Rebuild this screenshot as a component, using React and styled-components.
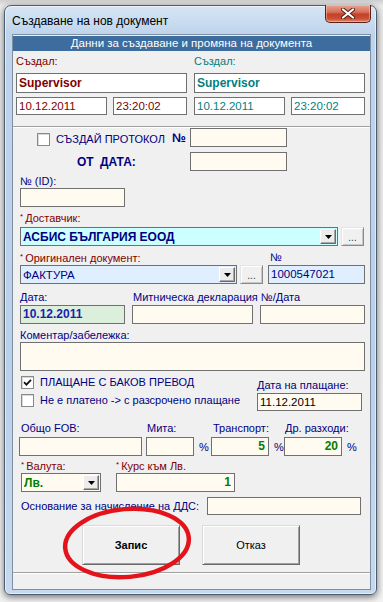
import React from "react";
import styled, { createGlobalStyle } from "styled-components";

const NAVY = "#000080";
const MAROON = "#800000";
const TEAL = "#008080";
const GREEN = "#008000";

const GlobalStyle = createGlobalStyle`
  html, body {
    margin: 0;
    padding: 0;
  }
  body {
    font-family: "Liberation Sans", Arial, sans-serif;
    background: #e6e6e6;
  }
  * {
    box-sizing: border-box;
  }
`;

const Desktop = styled.div`
  width: 383px;
  height: 602px;
  padding: 5px 0 0 4px;
  overflow: hidden;
  background: linear-gradient(to bottom, #cfcfcf 0, #ebebeb 6px, #f2f2f2 100%);
`;

const Window = styled.div`
  width: 373px;
  height: 590px;
  display: flex;
  flex-direction: column;
  padding: 0 5px 4px 7px;
  border: 1px solid #4e5d6e;
  border-radius: 7px 7px 6px 6px;
  background: linear-gradient(to bottom, #d6e5f5 0, #bed4ec 28px, #b9d0e9 60%, #c6d9ee 100%);
  box-shadow: inset 0 0 0 1px rgba(255, 255, 255, 0.55), 0 2px 7px rgba(0, 0, 0, 0.55);
`;

const TitleBar = styled.div`
  height: 28px;
  display: flex;
  align-items: flex-start;
  justify-content: space-between;
`;

const Caption = styled.div`
  font-size: 12px;
  line-height: 28px;
  padding-top: 1px;
  color: #000;
`;

const CloseButton = styled.div`
  width: 46px;
  height: 18px;
  margin-top: -1px;
  display: flex;
  align-items: center;
  justify-content: center;
  border: 1px solid #5c2018;
  border-top: none;
  border-radius: 0 0 5px 5px;
  background: linear-gradient(to bottom, #e8a291 0, #d7735d 40%, #c2422a 55%, #c94f34 80%, #e08a6c 100%);
  box-shadow: inset 0 0 0 1px rgba(255, 210, 190, 0.45);
`;

const Client = styled.div`
  position: relative;
  height: 556px;
  display: flex;
  flex-direction: column;
  background: #f0f0f0;
  border: 1px solid #7f8fa1;
`;

const GroupBox = styled.section`
  padding: 1px 0 11px;
  border-bottom: 1px solid #a0a0a0;
`;

const GroupHeader = styled.div`
  height: 15px;
  background: #3d6c9e;
  color: #fff;
  font-size: 11.5px;
  line-height: 15px;
  text-align: center;
`;

const AuditColumns = styled.div`
  display: grid;
  grid-template-columns: 171px 171px;
  column-gap: 7px;
  padding: 3px 0 0 3px;
`;

const AuditColumn = styled.div`
  display: flex;
  flex-direction: column;
`;

const Label = styled.div`
  flex: none;
  width: ${(p) => (p.$w ? `${p.$w}px` : "auto")};
  height: 14px;
  padding-left: ${(p) => p.$pl || 0}px;
  font-size: 11px;
  line-height: 14px;
  color: ${(p) => p.$color || NAVY};
  white-space: nowrap;
`;

const Star = styled.span`
  font-size: 8px;
  vertical-align: 3px;
  margin-right: 2px;
`;

const Field = styled.div`
  flex: none;
  width: ${(p) => p.$w}px;
  height: ${(p) => p.$h || 19}px;
  margin-top: ${(p) => p.$mt || 0}px;
  margin-left: ${(p) => p.$ml || 0}px;
  padding: 0 3px 0 2px;
  border: 1px solid #707070;
  background: ${(p) => p.$bg || "#fffbf0"};
  color: ${(p) => p.$color || "#000"};
  font-size: ${(p) => (p.$bold ? 12 : 11.5)}px;
  font-weight: ${(p) => (p.$bold ? 700 : 400)};
  line-height: ${(p) => (p.$h || 19) - 2}px;
  text-align: ${(p) => p.$align || "left"};
  white-space: nowrap;
  overflow: hidden;
`;

const DateRow = styled.div`
  display: flex;
  gap: 6px;
  margin-top: 4px;
`;

const Form = styled.div`
  display: flex;
  flex-direction: column;
  padding-left: 7px;
  border-top: 1px solid #fff;
`;

const Row = styled.div`
  display: flex;
  align-items: ${(p) => p.$align || "flex-start"};
  margin-top: ${(p) => p.$mt || 0}px;
`;

const CheckLine = styled.label`
  flex: none;
  display: flex;
  align-items: center;
  gap: 6px;
  width: ${(p) => (p.$w ? `${p.$w}px` : "auto")};
  height: ${(p) => p.$h || 18}px;
  margin-left: ${(p) => p.$ml || 0}px;
  align-self: ${(p) => p.$self || "auto"};
  font-size: 11px;
  color: ${NAVY};
  white-space: nowrap;
`;

const CheckBox = styled.span`
  flex: none;
  width: 13px;
  height: 13px;
  display: flex;
  align-items: center;
  justify-content: center;
  border: 1px solid #8a8a8a;
  background: #fff;
  box-shadow: inset 1px 1px 0 #d8d8d8;
`;

const NumSign = styled.div`
  flex: none;
  width: 15px;
  font-size: 12.5px;
  font-weight: 700;
  color: ${NAVY};
`;

const StrongLabel = styled.div`
  flex: none;
  width: ${(p) => p.$w}px;
  padding-left: ${(p) => p.$pl || 0}px;
  font-size: 12px;
  font-weight: 700;
  color: ${NAVY};
  word-spacing: 3px;
`;

const Combo = styled.div`
  flex: none;
  display: flex;
  align-items: center;
  width: ${(p) => p.$w}px;
  height: 19px;
  margin-left: ${(p) => p.$ml || 0}px;
  padding: 1px 1px 1px 2px;
  border: 1px solid #707070;
  background: ${(p) => p.$bg};
  color: ${(p) => p.$color};
  font-size: ${(p) => (p.$bold ? 12 : 11.5)}px;
  font-weight: ${(p) => (p.$bold ? 700 : 400)};
  white-space: nowrap;
`;

const ComboText = styled.span`
  flex: 1;
  overflow: hidden;
`;

const ArrowButton = styled.span`
  flex: none;
  width: 16px;
  height: 15px;
  display: flex;
  align-items: center;
  justify-content: center;
  background: #ececec;
  border: 1px solid;
  border-color: #fff #6b6b6b #6b6b6b #fff;
  box-shadow: inset -1px -1px 0 #a8a8a8;
`;

const DotsButton = styled.div`
  flex: none;
  width: 23px;
  height: 19px;
  margin-left: ${(p) => p.$ml || 0}px;
  display: flex;
  align-items: flex-end;
  justify-content: center;
  padding-bottom: 3px;
  background: #f0f0f0;
  border: 1px solid;
  border-color: #e4e4e4 #8a8a8a #8a8a8a #e4e4e4;
  box-shadow: inset 1px 1px 0 #fff, inset -1px -1px 0 #c8c8c8;
  font-size: 10px;
  line-height: 8px;
  color: #333;
`;

const PaymentBlock = styled.div`
  display: flex;
  margin-top: 2px;
`;

const PaymentChecks = styled.div`
  width: 237px;
  display: flex;
  flex-direction: column;
`;

const PaymentDate = styled.div`
  display: flex;
  flex-direction: column;
  padding-top: 5px;
`;

const CostGroup = styled.div`
  flex: none;
  display: flex;
  flex-direction: column;
  margin-left: ${(p) => p.$ml || 0}px;
`;

const CostLine = styled.div`
  display: flex;
  align-items: center;
  margin-top: 2px;
`;

const Percent = styled.span`
  flex: none;
  width: 7px;
  margin-left: 5px;
  font-size: 11px;
  color: ${NAVY};
`;

const ButtonBar = styled.div`
  display: flex;
  gap: 22px;
  margin: 10px 0 0 62px;
`;

const PushButton = styled.div`
  width: 98px;
  height: 40px;
  display: flex;
  align-items: center;
  justify-content: center;
  background: #f0f0f0;
  border: 1px solid;
  border-color: #dadada #696969 #696969 #dadada;
  box-shadow: inset 1px 1px 0 #fff, inset -1px -1px 0 #a0a0a0;
  font-size: 11px;
  font-weight: ${(p) => (p.$primary ? 700 : 400)};
  color: #000;
`;

const StatusBar = styled.div`
  margin-top: auto;
  height: 17px;
  border-top: 1px solid #a0a0a0;
  box-shadow: inset 0 1px 0 #fff;
`;

const Annotation = styled.svg`
  position: absolute;
  left: 47px;
  top: 470px;
  pointer-events: none;
`;

const DownArrow = () => (
  <svg width="7" height="4" viewBox="0 0 7 4">
    <polygon points="0,0 7,0 3.5,4" fill="#000" />
  </svg>
);

const CheckMark = () => (
  <svg width="9" height="9" viewBox="0 0 9 9">
    <path d="M1 4.2 L3.4 6.6 L8 1.8" fill="none" stroke="#111" strokeWidth="1.8" />
  </svg>
);

const Check = ({ checked }) => <CheckBox>{checked && <CheckMark />}</CheckBox>;

const Req = ({ children }) => (
  <>
    <Star>*</Star>
    {children}
  </>
);

const AuditBlock = ({ color, user, date, time, right }) => (
  <AuditColumn>
    <Label $color={color}>Създал:</Label>
    <Field $w={171} $h={20} $mt={5} $bg="#fff" $color={color} $bold>
      {user}
    </Field>
    <DateRow>
      <Field $w={91} $h={18} $bg="#fff" $color={color}>
        {date}
      </Field>
      <Field $w={right ? 74 : 74} $h={18} $bg="#fff" $color={color}>
        {time}
      </Field>
    </DateRow>
  </AuditColumn>
);

export default function App() {
  return (
    <>
      <GlobalStyle />
      <Desktop>
        <Window>
          <TitleBar>
            <Caption>Създаване на нов документ</Caption>
            <CloseButton>
              <svg width="14" height="11" viewBox="0 0 14 11">
                <path d="M2 1.5 L12 9.5 M12 1.5 L2 9.5" stroke="#5a1d12" strokeWidth="4" strokeLinecap="round" />
                <path d="M2 1.5 L12 9.5 M12 1.5 L2 9.5" stroke="#fff" strokeWidth="2.2" strokeLinecap="round" />
              </svg>
            </CloseButton>
          </TitleBar>

          <Client>
            <GroupBox>
              <GroupHeader>Данни за създаване и промяна на документа</GroupHeader>
              <AuditColumns>
                <AuditBlock color={MAROON} user="Supervisor" date="10.12.2011" time="23:20:02" />
                <AuditBlock color={TEAL} user="Supervisor" date="10.12.2011" time="23:20:02" right />
              </AuditColumns>
            </GroupBox>

            <Form>
              <Row>
                <CheckLine $w={135} $h={16} $ml={17} $self="flex-end">
                  <Check />
                  СЪЗДАЙ ПРОТОКОЛ
                </CheckLine>
                <NumSign style={{ alignSelf: "center" }}>№</NumSign>
                <Field $w={97} $ml={3} />
              </Row>

              <Row $mt={5} $align="center">
                <StrongLabel $w={170} $pl={57}>
                  ОТ ДАТА:
                </StrongLabel>
                <Field $w={97} />
              </Row>

              <Label style={{ marginTop: 3 }}>№ (ID):</Label>
              <Field $w={105} />

              <Label $color={MAROON} style={{ marginTop: 3 }}>
                <Req>Доставчик:</Req>
              </Label>
              <Row $mt={3}>
                <Combo $w={318} $bg="#ccffff" $color={NAVY} $bold>
                  <ComboText>АСБИС БЪЛГАРИЯ ЕООД</ComboText>
                  <ArrowButton>
                    <DownArrow />
                  </ArrowButton>
                </Combo>
                <DotsButton $ml={3}>...</DotsButton>
              </Row>

              <Row $mt={4}>
                <Label $w={250} $color={MAROON}>
                  <Req>Оригинален документ:</Req>
                </Label>
                <Label>№</Label>
              </Row>
              <Row $mt={1}>
                <Combo $w={217} $bg="#e0efff" $color={NAVY}>
                  <ComboText>ФАКТУРА</ComboText>
                  <ArrowButton>
                    <DownArrow />
                  </ArrowButton>
                </Combo>
                <DotsButton $ml={3}>...</DotsButton>
                <Field $w={97} $ml={5} $bg="#e0efff" $color={NAVY}>
                  1000547021
                </Field>
              </Row>

              <Row $mt={6}>
                <Label $w={113}>Дата:</Label>
                <Label>Митническа декларация №/Дата</Label>
              </Row>
              <Row $mt={1}>
                <Field $w={105} $bg="#dcefdc" $color="#1a1fb0" $bold>
                  10.12.2011
                </Field>
                <Field $w={121} $ml={7} />
                <Field $w={105} $ml={7} />
              </Row>

              <Label style={{ marginTop: 4 }}>Коментар/забележка:</Label>
              <Field $w={345} $h={29} />

              <PaymentBlock>
                <PaymentChecks>
                  <CheckLine $ml={1}>
                    <Check checked />
                    ПЛАЩАНЕ С БАКОВ ПРЕВОД
                  </CheckLine>
                  <CheckLine $ml={1}>
                    <Check />
                    Не е платено -&gt; с разсрочено плащане
                  </CheckLine>
                </PaymentChecks>
                <PaymentDate>
                  <Label>Дата на плащане:</Label>
                  <Field $w={105} $h={18} $mt={1}>
                    11.12.2011
                  </Field>
                </PaymentDate>
              </PaymentBlock>

              <Row $mt={10}>
                <CostGroup $ml={-1}>
                  <Label $pl={2}>Общо FOB:</Label>
                  <CostLine>
                    <Field $w={123} />
                  </CostLine>
                </CostGroup>
                <CostGroup $ml={4}>
                  <Label $pl={1}>Мита:</Label>
                  <CostLine>
                    <Field $w={48} />
                    <Percent>%</Percent>
                  </CostLine>
                </CostGroup>
                <CostGroup $ml={5}>
                  <Label $pl={2}>Транспорт:</Label>
                  <CostLine>
                    <Field $w={58} $align="right" $color={GREEN} $bold>
                      5
                    </Field>
                    <Percent>%</Percent>
                  </CostLine>
                </CostGroup>
                <CostGroup $ml={3}>
                  <Label $pl={1}>Др. разходи:</Label>
                  <CostLine>
                    <Field $w={58} $align="right" $color={GREEN} $bold>
                      20
                    </Field>
                    <Percent>%</Percent>
                  </CostLine>
                </CostGroup>
              </Row>

              <Row $mt={2}>
                <Label $w={96} $pl={1} $color={MAROON}>
                  <Req>Валута:</Req>
                </Label>
                <Label $color={MAROON}>
                  <Req>Курс към Лв.</Req>
                </Label>
              </Row>
              <Row $mt={1}>
                <Combo $w={80} $ml={1} $bg="#fffbf0" $color={GREEN} $bold>
                  <ComboText>Лв.</ComboText>
                  <ArrowButton>
                    <DownArrow />
                  </ArrowButton>
                </Combo>
                <Field $w={119} $ml={15} $align="right" $color={GREEN} $bold>
                  1
                </Field>
              </Row>

              <Row $mt={5} $align="center">
                <Label $w={187} $pl={1}>
                  Основание за начисление на ДДС:
                </Label>
                <Field $w={154} $h={18} />
              </Row>

              <ButtonBar>
                <PushButton $primary>Запис</PushButton>
                <PushButton>Отказ</PushButton>
              </ButtonBar>
            </Form>

            <StatusBar />

            <Annotation width="134" height="76" viewBox="0 0 134 76">
              <ellipse
                cx="67"
                cy="38"
                rx="62"
                ry="34"
                transform="rotate(-5 67 38)"
                fill="none"
                stroke="#e3121b"
                strokeWidth="4.5"
              />
            </Annotation>
          </Client>
        </Window>
      </Desktop>
    </>
  );
}
